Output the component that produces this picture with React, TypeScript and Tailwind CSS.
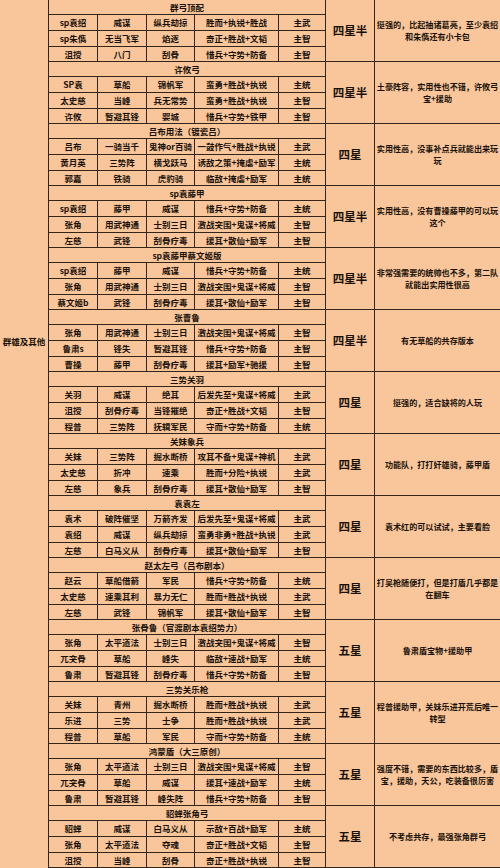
import React from "react";

type Row = [string, string, string, string, string];
type Group = { title: string; star: string; desc: string; rows: Row[] };

const groups: Group[] = [
  {
    title: "群弓顶配",
    star: "四星半",
    desc: "挺强的，比起抽诸葛亮，至少袁绍和朱儁还有小卡包",
    rows: [
      ["sp袁绍", "威谋", "纵兵劫掠", "胜而+执锐+胜战", "主武"],
      ["sp朱儁", "无当飞军", "焰逐", "奇正+胜战+文韬", "主智"],
      ["沮授", "八门", "刮骨", "惜兵+守势+防备", "主智"],
    ],
  },
  {
    title: "许攸弓",
    star: "四星半",
    desc: "土豪阵容，实用性也不错，许攸弓宝+援助",
    rows: [
      ["SP袁", "草船", "锦帆军", "蛮勇+胜战+执锐", "主统"],
      ["太史慈", "当峰", "兵无常势", "蛮勇+胜战+执锐", "主智"],
      ["许攸", "暂避其锋", "婴城", "惜兵+守势+铁甲", "主智"],
    ],
  },
  {
    title: "吕布用法（镀瓷吕）",
    star: "四星",
    desc: "实用性高，没事补点兵就能出来玩玩",
    rows: [
      ["吕布", "一骑当千", "鬼神or百骑", "一鼓作气+胜战+执锐", "主武"],
      ["黄月英", "三势阵", "横戈跃马", "诱敌之策+掩虐+励军", "主统"],
      ["郭嘉", "铁骑", "虎豹骑", "临敌+掩虐+励军", "主统"],
    ],
  },
  {
    title: "sp袁藤甲",
    star: "四星半",
    desc: "实用性高，没有曹操藤甲的可以玩这个",
    rows: [
      ["sp袁绍", "藤甲", "威谋", "惜兵+守势+防备", "主统"],
      ["张角", "用武神通", "士别三日", "激战突围+鬼谋+将威", "主智"],
      ["左慈", "武锋", "刮骨疗毒", "援其+散仙+励军", "主智"],
    ],
  },
  {
    title: "sp袁藤甲蔡文姬版",
    star: "四星半",
    desc: "非常强需要的统帅也不多，第二队就能出实用性很高",
    rows: [
      ["sp袁绍", "藤甲", "威谋", "惜兵+守势+防备", "主统"],
      ["张角", "用武神通", "士别三日", "激战突围+鬼谋+将威", "主智"],
      ["蔡文姬b", "武锋", "刮骨疗毒", "援其+散仙+励军", "主智"],
    ],
  },
  {
    title: "张曹鲁",
    star: "四星半",
    desc: "有无草船的共存版本",
    rows: [
      ["张角", "用武神通", "士别三日", "激战突围+鬼谋+将威", "主智"],
      ["鲁肃s", "锋失", "暂避其锋", "惜兵+守势+防备", "主智"],
      ["曹操", "藤甲", "刮骨疗毒", "援其+励军+驰援", "主智"],
    ],
  },
  {
    title: "三势关羽",
    star: "四星",
    desc: "挺强的，适合缺将的人玩",
    rows: [
      ["关羽", "威谋", "绝其", "后发先至+鬼谋+将威", "主武"],
      ["沮授", "刮骨疗毒", "当锋摧绝", "奇正+胜战+文韬", "主智"],
      ["程普", "三势阵", "抚辑军民", "守而+守势+防备", "主统"],
    ],
  },
  {
    title: "关妹象兵",
    star: "四星",
    desc: "功能队，打打奸雄骑，藤甲盾",
    rows: [
      ["关妹", "三势阵", "掘水断桥", "攻其不备+鬼谋+神机", "主武"],
      ["太史慈", "折冲", "速乘", "胜而+分险+执锐", "主武"],
      ["左慈", "象兵", "刮骨疗毒", "援其+散仙+励军", "主智"],
    ],
  },
  {
    title: "袁袁左",
    star: "四星",
    desc: "袁术红的可以试试，主要看脸",
    rows: [
      ["袁术", "破阵催坚", "万箭齐发", "后发先至+鬼谋+将威", "主武"],
      ["袁绍", "威谋", "纵兵劫掠", "蛮勇非勇+胜战+执锐", "主武"],
      ["左慈", "白马义从", "刮骨疗毒", "援其+散仙+励军", "主智"],
    ],
  },
  {
    title: "赵太左弓（吕布剧本）",
    star: "四星",
    desc: "打吴枪随便打，但是打盾几乎都是在翻车",
    rows: [
      ["赵云", "草船借箭", "军民", "惜兵+守势+防备", "主统"],
      ["太史慈", "速乘其利", "暴力无仁", "胜而+胜战+执锐", "主武"],
      ["左慈", "武锋", "锦帆军", "援其+散仙+励军", "主智"],
    ],
  },
  {
    title: "张骨鲁（官渡剧本袁绍势力）",
    star: "五星",
    desc: "鲁肃盾宝物+援助甲",
    rows: [
      ["张角", "太平道法", "士别三日", "激战突围+鬼谋+将威", "主智"],
      ["兀突骨", "草船", "峰失", "临敌+速战+励军", "主统"],
      ["鲁肃", "暂避其锋", "刮骨疗毒", "惜兵+守势+防备", "主智"],
    ],
  },
  {
    title: "三势关乐枪",
    star: "五星",
    desc: "程普援助甲，关妹乐进开荒后唯一转型",
    rows: [
      ["关妹", "青州", "掘水断桥", "胜而+胜战+执锐", "主武"],
      ["乐进", "三势", "士争", "胜而+胜战+执锐", "主武"],
      ["程普", "草船", "军民", "守而+守势+防备", "主统"],
    ],
  },
  {
    title: "鸿蒙盾（大三原创）",
    star: "五星",
    desc: "强度不错，需要的东西比较多，盾宝，援助，天公，吃装备很厉害",
    rows: [
      ["张角", "太平道法", "士别三日", "激战突围+鬼谋+将威", "主智"],
      ["兀突骨", "草船", "威谋", "援其+速战+励军", "主统"],
      ["鲁肃", "暂避其锋", "峰失阵", "惜兵+守势+防备", "主智"],
    ],
  },
  {
    title: "貂蝉张角弓",
    star: "五星",
    desc: "不考虑共存，最强张角群弓",
    rows: [
      ["貂蝉", "威谋", "白马义从", "示敌+百战+励军", "主统"],
      ["张角", "太平道法", "夺魂", "奇正+胜战+文韬", "主智"],
      ["沮授", "当峰", "刮骨", "奇正+胜战+执锐", "主智"],
    ],
  },
];

const colW = ["w-[49px]", "w-[49px]", "w-[48px]", "w-[84px]", "w-[47px]"];
const rowH = ["h-[16px]", "h-[16px]", "h-[14px]"];

function GroupBlock({ g }: { g: Group }) {
  return (
    <div className="flex h-[62px] border-b border-[#33251a]">
      <div className="flex w-[277px] flex-col">
        <div className="flex h-[15px] items-center justify-center border-b border-r border-[#33251a] leading-none">
          {g.title}
        </div>
        {g.rows.map((r, i) => (
          <div
            key={i}
            className={`flex ${rowH[i]} ${i < 2 ? "border-b" : ""} border-[#33251a]`}
          >
            {r.map((c, j) => (
              <div
                key={j}
                className={`${colW[j]} flex shrink-0 items-center justify-center whitespace-nowrap border-r border-[#33251a] leading-none`}
              >
                {c}
              </div>
            ))}
          </div>
        ))}
      </div>
      <div className="flex w-[49px] shrink-0 items-center justify-center border-r border-[#33251a] text-[11.5px] leading-none">
        {g.star}
      </div>
      <div className="flex w-[125px] shrink-0 items-center justify-center text-center text-[8.1px] leading-[12px]">
        <span className="block w-full">{g.desc}</span>
      </div>
    </div>
  );
}

export default function App() {
  return (
    <div className="flex h-[868px] w-[500px] overflow-hidden bg-[#f9c59a] font-['Noto_Sans_CJK_SC','Noto_Sans',sans-serif] text-[8.5px] font-bold text-[#1a120a]">
      <div className="flex w-[49px] shrink-0 flex-col items-center border-r border-[#33251a] pt-[335px] leading-[12px]">
        群雄及其他
      </div>
      <div className="flex w-[451px] flex-col">
        {groups.map((g, i) => (
          <GroupBlock key={i} g={g} />
        ))}
      </div>
    </div>
  );
}
